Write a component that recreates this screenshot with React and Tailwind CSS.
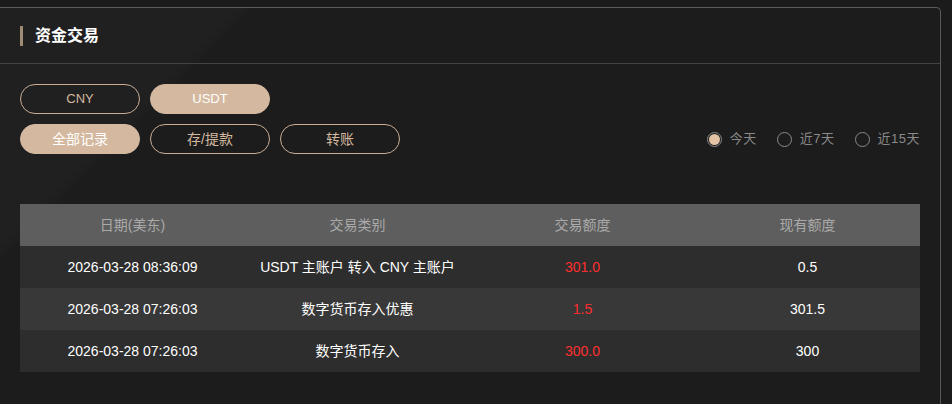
import { useState } from "react";

const rows = [
  { date: "2026-03-28 08:36:09", type: "USDT 主账户 转入 CNY 主账户", amount: "301.0", balance: "0.5" },
  { date: "2026-03-28 07:26:03", type: "数字货币存入优惠", amount: "1.5", balance: "301.5" },
  { date: "2026-03-28 07:26:03", type: "数字货币存入", amount: "300.0", balance: "300" },
];

const PillButton = ({ active, latin, children, onClick }) => (
  <button
    onClick={onClick}
    className={
      (latin ? "text-[13px] " : "text-[14px] ") +
      (active
        ? "w-[120px] h-[30px] rounded-full border border-[#d4b9a0] bg-[#d4b9a0] text-white"
        : "w-[120px] h-[30px] rounded-full border border-[#c9ad94] bg-transparent text-[#d4b9a0]")
    }
  >
    {children}
  </button>
);

const Radio = ({ checked, label, onClick }) => (
  <label onClick={onClick} className="flex items-center gap-[8px] cursor-pointer text-[13px] text-[#8a8a8a]">
    <span className="w-[15px] h-[15px] rounded-full border border-[#8a8a8a] flex items-center justify-center">
      {checked && <span className="w-[11px] h-[11px] rounded-full bg-[#e3c4a4]"></span>}
    </span>
    <span className="tracking-[0.5px]">{label}</span>
  </label>
);

const App = () => {
  const [currency, setCurrency] = useState("USDT");
  const [tab, setTab] = useState("all");
  const [range, setRange] = useState("today");

  return (
    <div
      className="w-[952px] h-[404px] overflow-hidden bg-[#1b1b1b] pt-[7px]"
      style={{ fontFamily: '"Liberation Sans", "Noto Sans CJK SC", sans-serif' }}
    >
      <div className="w-[941px] h-[420px] border-t border-r border-[#5a5a5a] rounded-tr-[5px] bg-[linear-gradient(135deg,#202020_0px,#202020_168px,#1c1c1c_182px)]">
        <div className="h-[56px] border-b border-[#444] flex items-center pl-[20px]">
          <span className="w-[3px] h-[20px] bg-[#a08b77]"></span>
          <h2 className="ml-[12px] text-[16px] font-bold text-white">资金交易</h2>
        </div>

        <div className="pl-[20px] pr-[20px] pt-[20px]">
          <div className="flex gap-[10px]">
            <PillButton latin active={currency === "CNY"} onClick={() => setCurrency("CNY")}>CNY</PillButton>
            <PillButton latin active={currency === "USDT"} onClick={() => setCurrency("USDT")}>USDT</PillButton>
          </div>
          <div className="flex items-center justify-between mt-[10px]">
            <div className="flex gap-[10px]">
              <PillButton active={tab === "all"} onClick={() => setTab("all")}>全部记录</PillButton>
              <PillButton active={tab === "dep"} onClick={() => setTab("dep")}>存/提款</PillButton>
              <PillButton active={tab === "trans"} onClick={() => setTab("trans")}>转账</PillButton>
            </div>
            <div className="flex items-center gap-[20px]">
              <Radio checked={range === "today"} label="今天" onClick={() => setRange("today")} />
              <Radio checked={range === "7"} label="近7天" onClick={() => setRange("7")} />
              <Radio checked={range === "15"} label="近15天" onClick={() => setRange("15")} />
            </div>
          </div>

          <table className="w-[900px] mt-[50px] table-fixed border-collapse text-[14px]">
            <thead>
              <tr className="bg-[#5e5e5e] h-[42px]">
                <th className="font-normal text-[#aaa]">日期(美东)</th>
                <th className="font-normal text-[#aaa]">交易类别</th>
                <th className="font-normal text-[#aaa]">交易额度</th>
                <th className="font-normal text-[#aaa]">现有额度</th>
              </tr>
            </thead>
            <tbody>
              {rows.map((row, i) => (
                <tr key={i} className={i % 2 === 1 ? "bg-[#383838] h-[42px]" : "bg-[#2d2d2d] h-[42px]"}>
                  <td className="text-center text-white">{row.date}</td>
                  <td className="text-center text-white">{row.type}</td>
                  <td className="text-center text-[#ff2d2d]">{row.amount}</td>
                  <td className="text-center text-white">{row.balance}</td>
                </tr>
              ))}
            </tbody>
          </table>
        </div>
      </div>
    </div>
  );
};

export default App;
